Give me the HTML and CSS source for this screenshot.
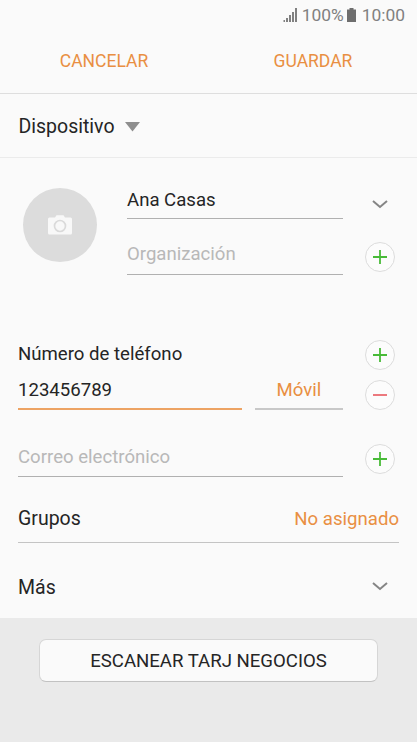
FILE: index.html
```html
<!DOCTYPE html>
<html lang="es">
<head>
<meta charset="utf-8">
<title>Contacto</title>
<link rel="stylesheet" href="styles.css">
</head>
<body>
<main class="screen">
  <div class="status">
    <svg class="signal" width="15" height="14" viewBox="0 0 15 14" fill="#808080"><path d="M.5 12h1.500v2H.5zM3 10h2v4H3zM6 7h2v7H6zM9 4h2v10H9zM12 0h2v14h-2z"/></svg>
    <span class="percent">100%</span>
    <svg class="battery" width="9" height="14" viewBox="0 0 9 14" fill="#6e6e6e"><path d="M2.500 0h4v1.500H9V14H0V1.500h2.500z"/></svg>
    <span class="clock">10:00</span>
  </div>
  <header class="actions"><span class="action"><span class="t">CANCELAR</span></span><span class="action"><span class="t">GUARDAR</span></span></header>
  <div class="device"><span class="t">Dispositivo</span><svg width="15" height="10" viewBox="0 0 15 10"><path d="M0 0h15L7.500 9.500z" fill="#8e8e8e"/></svg></div>
  <section class="profile">
    <div class="avatar"><svg width="26" height="22" viewBox="0 0 26 22"><path d="M2.500 3.500H8l1.500-2.300h7L18 3.500h5.500q1.500 0 1.500 1.500v14q0 1.500-1.500 1.500h-21Q1 20.500 1 19V5q0-1.500 1.500-1.500z" fill="#f8f8f8"/><circle cx="13" cy="12" r="5.500" fill="none" stroke="#dadada" stroke-width="1.700"/></svg></div>
    <div class="fields">
      <div class="field name"><span class="t">Ana Casas</span></div>
      <div class="field org"><span class="t">Organización</span></div>
    </div>
    <div class="side">
      <svg class="chev" width="16" height="9" viewBox="0 0 16 9"><path d="M1 1l7 6 7-6" fill="none" stroke="#858585" stroke-width="2"/></svg>
      <svg class="round" width="30" height="30" viewBox="0 0 30 30"><circle cx="15" cy="15" r="14.500"/><path class="plus" d="M8 15h14M15 8v14"/></svg>
    </div>
  </section>
  <section class="phone">
    <div class="phone-head"><span class="t">Número de teléfono</span><svg class="round" width="30" height="30" viewBox="0 0 30 30"><circle cx="15" cy="15" r="14.500"/><path class="plus" d="M8 15h14M15 8v14"/></svg></div>
    <div class="phone-row"><div class="field number"><span class="t">123456789</span></div><div class="field kind"><span class="t">Móvil</span></div><svg class="round" width="30" height="30" viewBox="0 0 30 30"><circle cx="15" cy="15" r="14.500"/><path class="minus" d="M8 15h14"/></svg></div>
  </section>
  <section class="email"><div class="field"><span class="t">Correo electrónico</span></div><svg class="round" width="30" height="30" viewBox="0 0 30 30"><circle cx="15" cy="15" r="14.500"/><path class="plus" d="M8 15h14M15 8v14"/></svg></section>
  <section class="groups"><span class="t">Grupos</span><span class="t accent">No asignado</span></section>
  <section class="more"><span class="t">Más</span><svg class="chev" width="16" height="9" viewBox="0 0 16 9"><path d="M1 1l7 6 7-6" fill="none" stroke="#858585" stroke-width="2"/></svg></section>
  <footer class="footer"><button class="scan"><span class="t">ESCANEAR TARJ NEGOCIOS</span></button></footer>
</main>
</body>
</html>
```
FILE: styles.css
```css
* { box-sizing: border-box; }
body { margin: 0; font: 18.6px/24px Roboto, sans-serif; color: #252525; background: #fafafa; }
.screen { width: 417px; height: 742px; display: flex; flex-direction: column; overflow: hidden; }
.t { white-space: nowrap; }
.status { height: 30px; display: flex; justify-content: flex-end; align-items: center; padding-right: 12px; color: #808080; font-size: 17.4px; }
.percent { margin: 0 3px 0 4px; }
.clock { margin-left: 6px; }
.actions { height: 64px; display: flex; border-bottom: 1px solid #dedede; color: #e98f42; }
.action { flex: 1; text-align: center; padding-top: 19px; font-size: 17.5px; }
.action + .action { padding-left: 1px; }
.device { height: 64px; display: flex; align-items: center; gap: 10px; padding: 2px 0 0 18.5px; font-size: 19.5px; border-bottom: 1px solid #ebebeb; }
.profile { height: 176px; display: flex; padding: 30px 22px 0 23px; }
.avatar { width: 74px; height: 74px; border-radius: 50%; background: #dcdcdc; display: grid; place-items: center; }
.fields { width: 216px; margin-left: 30px; }
.field { border-bottom: 1px solid #b0b0b0; }
.name { height: 31px; }
.org { height: 56px; padding-top: 23px; color: #b8b8b8; }
.side { margin-left: 22px; display: flex; flex-direction: column; align-items: center; }
.side .chev { margin: 12px 0 33.4px; }
.round { display: block; flex: none; fill: #fcfcfc; stroke: #dcdcdc; }
.plus { stroke: #48bb38; stroke-width: 1.8; }
.minus { stroke: #ea6a70; stroke-width: 1.8; }
.phone { padding: 6px 22px 0 18px; height: 110px; }
.phone-head { display: flex; justify-content: space-between; }
.phone-head .t { padding-top: 2px; }
.phone-row { display: flex; margin-top: 7px; }
.number, .kind { height: 33px; padding-top: 1px; border-bottom-width: 2px; }
.number { width: 224px; border-bottom-color: #eda363; }
.kind { width: 88px; margin-left: 13px; text-align: center; color: #e98f42; border-bottom-color: #c8c8c8; }
.phone-row .round { margin: 3px 0 0 22px; }
.email { height: 62px; display: flex; padding-left: 18px; gap: 22px; color: #b8b8b8; }
.email .field { width: 325px; height: 33px; padding-top: 1px; }
.groups { margin: 0 18px; height: 37px; padding-top: 1px; border-bottom: 1px solid #c4c4c4; display: flex; justify-content: space-between; font-size: 19.5px; }
.accent { color: #e98f42; font-size: 18.6px; }
.more { height: 75px; display: flex; justify-content: space-between; align-items: center; padding: 12px 29px 0 18px; font-size: 19.5px; }
.more .t { padding-top: 2px; }
.footer { flex: 1; background: #eaeaea; padding: 21px 39px; }
.scan { display: block; width: 339px; height: 43px; border: 1px solid #d6d6d6; border-bottom-color: #c2c2c2; border-radius: 7px; background: #fafafa; font: 18.6px/24px Roboto, sans-serif; color: #252525; padding: 0; }
```
